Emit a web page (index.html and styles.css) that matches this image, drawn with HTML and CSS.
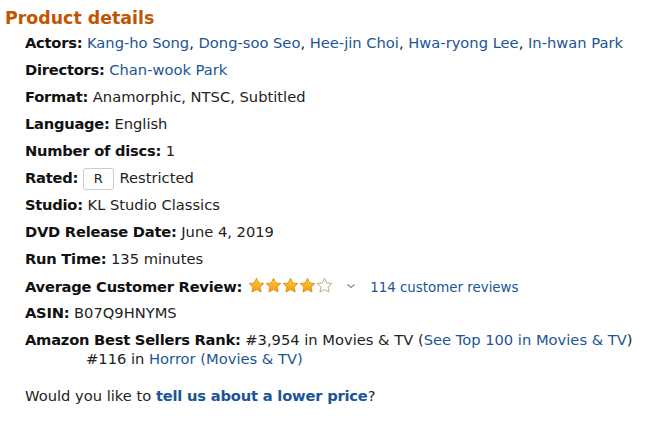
FILE: index.html
```html
<!DOCTYPE html>
<html>
<head>
<meta charset="utf-8">
<link rel="stylesheet" href="styles.css">
</head>
<body>
<div class="details">
  <h2 class="title">Product details</h2>
  <ul class="list">
    <li><b>Actors:</b> <a>Kang-ho Song</a>, <a>Dong-soo Seo</a>, <a>Hee-jin Choi</a>, <a>Hwa-ryong Lee</a>, <a>In-hwan Park</a></li>
    <li><b>Directors:</b> <a>Chan-wook Park</a></li>
    <li><b>Format:</b> Anamorphic, NTSC, Subtitled</li>
    <li><b>Language:</b> English</li>
    <li><b>Number of discs:</b> 1</li>
    <li><b>Rated:</b> <span class="badge">R</span> Restricted</li>
    <li><b>Studio:</b> KL Studio Classics</li>
    <li><b>DVD Release Date:</b> June 4, 2019</li>
    <li><b>Run Time:</b> 135 minutes</li>
    <li class="review"><b>Average Customer Review:</b>
      <span class="stars">
        <svg class="star" viewBox="0 0 20 20"><defs><linearGradient id="g" x1="0" y1="0" x2="0" y2="1"><stop offset="0" stop-color="#ffce3d"/><stop offset="1" stop-color="#f49a0b"/></linearGradient></defs><path d="M10 1.5l2.6 5.5 6 .7-4.4 4.1 1.2 5.9L10 14.8l-5.4 2.9 1.2-5.9L1.4 7.7l6-.7z" fill="url(#g)" stroke="#d88a10" stroke-width="1"/></svg>
        <svg class="star" viewBox="0 0 20 20"><path d="M10 1.5l2.6 5.5 6 .7-4.4 4.1 1.2 5.9L10 14.8l-5.4 2.9 1.2-5.9L1.4 7.7l6-.7z" fill="url(#g)" stroke="#d88a10" stroke-width="1"/></svg>
        <svg class="star" viewBox="0 0 20 20"><path d="M10 1.5l2.6 5.5 6 .7-4.4 4.1 1.2 5.9L10 14.8l-5.4 2.9 1.2-5.9L1.4 7.7l6-.7z" fill="url(#g)" stroke="#d88a10" stroke-width="1"/></svg>
        <svg class="star" viewBox="0 0 20 20"><path d="M10 1.5l2.6 5.5 6 .7-4.4 4.1 1.2 5.9L10 14.8l-5.4 2.9 1.2-5.9L1.4 7.7l6-.7z" fill="url(#g)" stroke="#d88a10" stroke-width="1"/></svg>
        <svg class="star" viewBox="0 0 20 20"><path d="M10 1.5l2.6 5.5 6 .7-4.4 4.1 1.2 5.9L10 14.8l-5.4 2.9 1.2-5.9L1.4 7.7l6-.7z" fill="#fff" stroke="#b0a070" stroke-width="1"/></svg>
      </span>
      <svg class="chev" viewBox="0 0 10 6"><path d="M1.5 1.5l3.5 3 3.5-3" fill="none" stroke="#888" stroke-width="1.2"/></svg>
      <a class="reviews">114 customer reviews</a>
    </li>
    <li><b>ASIN:</b> B07Q9HNYMS</li>
    <li class="rank"><b>Amazon Best Sellers Rank:</b> #3,954 in Movies &amp; TV (<a>See Top 100 in Movies &amp; TV</a>)
      <div class="sub">#116 in <a>Horror (Movies &amp; TV)</a></div>
    </li>
  </ul>
  <p class="price">Would you like to <a class="strong">tell us about a lower price</a>?</p>
</div>
</body>
</html>
```
FILE: styles.css
```css
html, body {
  margin: 0;
  padding: 0;
  background: #fff;
}
body {
  font-family: "DejaVu Sans", Verdana, sans-serif;
  font-size: 14.7px;
  color: #222;
}
.details {
  padding: 7px 0 0 5px;
}
.title {
  margin: 0;
  font-size: 17.4px;
  font-weight: bold;
  color: #c45500;
  line-height: 22px;
}
.list {
  list-style: none;
  margin: 5px 0 0 0;
  padding: 0 0 0 20px;
}
.list li {
  line-height: 18px;
  height: 18px;
  margin-bottom: 9px;
}
.list li.rank {
  height: auto;
}
.list b {
  color: #111;
  letter-spacing: -0.25px;
}
a {
  color: #1b5596;
}
.badge {
  display: inline-block;
  border: 1px solid #ccc;
  border-radius: 3px;
  padding: 2px 10px;
  margin: -3px 1px -3px 0;
  font-size: 13px;
  line-height: 16px;
}
.stars {
  display: inline-flex;
  vertical-align: -2px;
  margin-left: 1px;
}
.star {
  width: 17px;
  height: 17px;
}
.chev {
  width: 10px;
  height: 6px;
  margin: 0 9px 0 9px;
  vertical-align: 3px;
}
.reviews {
  font-size: 13.4px;
}
.rank .val {
  letter-spacing: -0.1px;
}
.sub {
  padding-left: 61px;
  line-height: 19px;
}
.price {
  margin: 19px 0 0 20px;
}
.price .strong {
  font-weight: bold;
  letter-spacing: -0.2px;
}
```
